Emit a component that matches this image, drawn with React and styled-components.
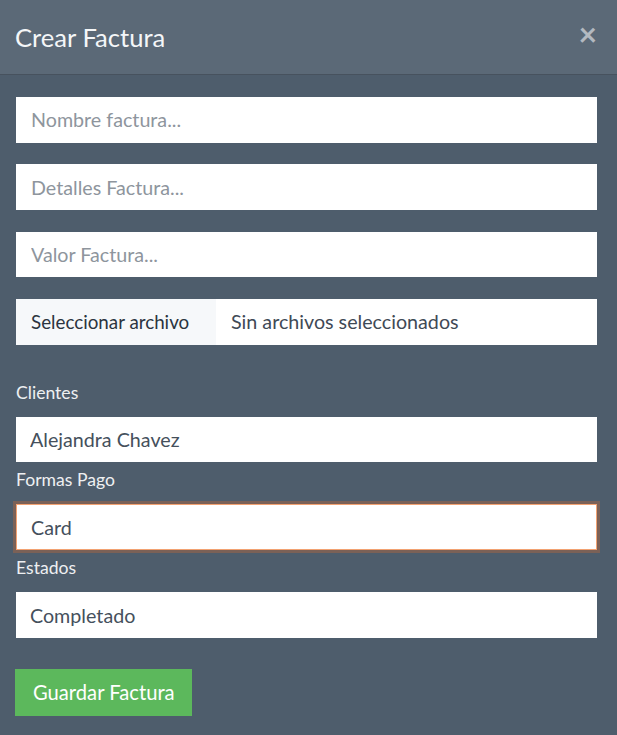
import React from "react";
import styled, { createGlobalStyle } from "styled-components";

const GlobalStyle = createGlobalStyle`
  html, body {
    margin: 0;
    padding: 0;
    background: #4e5d6c;
  }
  body {
    font-family: Lato, "Open Sans", sans-serif;
  }
`;

const Modal = styled.div`
  width: 617px;
  min-height: 735px;
  background: #4e5d6c;
`;

const Header = styled.div`
  height: 74px;
  display: flex;
  align-items: center;
  justify-content: space-between;
  padding: 0 20px 0 15px;
  background: #5b6977;
  border-bottom: 1px solid #47525e;
`;

const Title = styled.h4`
  margin: 0;
  font-size: 25.6px;
  font-weight: 400;
  color: #f4f6f8;
`;

const Close = styled.button`
  margin-bottom: 7px;
  border: 0;
  background: none;
  padding: 0;
  color: #b3b9c0;
  font-family: Lato, sans-serif;
  font-size: 32px;
  font-weight: 700;
  line-height: 1;
  cursor: pointer;
`;

const Body = styled.form`
  display: flex;
  flex-direction: column;
  padding: 22px 20px 20px 16px;
`;

const TextInput = styled.input`
  box-sizing: border-box;
  height: 45.5px;
  margin: 0 0 21.8px;
  padding: 0 15px;
  border: 0;
  outline: none;
  background: #fff;
  font-family: Lato, sans-serif;
  font-size: 19.7px;
  color: #45505c;
  &::placeholder {
    color: #8e959d;
  }
`;

const FileField = styled.div`
  display: flex;
  height: 46px;
  background: #fff;
  font-size: 19.7px;
`;

const FileButton = styled.span`
  display: flex;
  align-items: center;
  width: 200px;
  box-sizing: border-box;
  padding-left: 15px;
  background: #f6f8fa;
  color: #2b3440;
  font-size: 18.8px;
`;

const FileName = styled.span`
  display: flex;
  align-items: center;
  padding-left: 15px;
  color: #3f4a56;
`;

const Label = styled.label`
  display: block;
  margin: ${(p) => (p.first ? "36px" : "6px")} 0 12px;
  font-size: 17.6px;
  line-height: 24px;
  color: #eef0f2;
`;

const Select = styled.select`
  box-sizing: border-box;
  height: ${(p) => (p.focused ? "46px" : "45.5px")};
  padding: 0 14px;
  border: ${(p) => (p.focused ? "1px solid #f2a272" : "0")};
  box-shadow: ${(p) => (p.focused ? "0 0 0 3px #7b6157" : "none")};
  outline: none;
  appearance: none;
  border-radius: 0;
  background: #fff;
  font-family: Lato, sans-serif;
  font-size: 19.7px;
  color: #45505c;
`;

const SubmitButton = styled.button`
  align-self: flex-start;
  margin-top: 31px;
  height: 47px;
  margin-left: -1px;
  padding: 0 17px 0 18px;
  border: 0;
  background: #5cb85c;
  color: #fff;
  font-family: Lato, sans-serif;
  font-size: 20.2px;
  cursor: pointer;
`;

export default function App() {
  return (
    <>
      <GlobalStyle />
      <Modal>
        <Header>
          <Title>Crear Factura</Title>
          <Close type="button">×</Close>
        </Header>
        <Body onSubmit={(e) => e.preventDefault()}>
          <TextInput placeholder="Nombre factura..." />
          <TextInput placeholder="Detalles Factura..." />
          <TextInput placeholder="Valor Factura..." />
          <FileField>
            <FileButton>Seleccionar archivo</FileButton>
            <FileName>Sin archivos seleccionados</FileName>
          </FileField>

          <Label first>Clientes</Label>
          <Select defaultValue="1">
            <option value="1">Alejandra Chavez</option>
          </Select>
          <Label>Formas Pago</Label>
          <Select focused defaultValue="card">
            <option value="card">Card</option>
          </Select>
          <Label>Estados</Label>
          <Select defaultValue="done">
            <option value="done">Completado</option>
          </Select>

          <SubmitButton type="submit">Guardar Factura</SubmitButton>
        </Body>
      </Modal>
    </>
  );
}
